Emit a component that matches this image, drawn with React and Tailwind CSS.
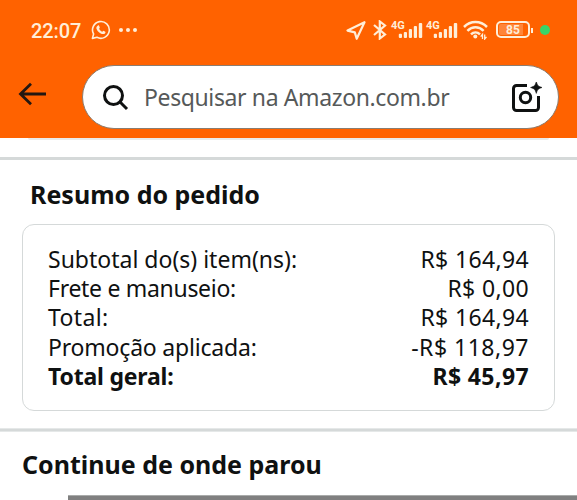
import React from 'react'

const summaryRows = [
  { label: 'Subtotal do(s) item(ns):', value: 'R$ 164,94', labelClass: 'tracking-[0px]', valueClass: 'tracking-[0.35px]' },
  { label: 'Frete e manuseio:', value: 'R$ 0,00', labelClass: 'tracking-[-0.3px]', valueClass: 'tracking-[0.35px]' },
  { label: 'Total:', value: 'R$ 164,94', labelClass: 'tracking-[0.35px]', valueClass: 'tracking-[0.35px]' },
  { label: 'Promoção aplicada:', value: '-R$ 118,97', labelClass: 'tracking-[-0.2px]', valueClass: 'tracking-[0.5px]' },
  { label: 'Total geral:', value: 'R$ 45,97', labelClass: 'tracking-[-0.2px]', valueClass: 'tracking-[0.4px]', bold: true },
]

function WhatsappIcon() {
  return (
    <svg className="w-[20px] h-[20px]" viewBox="0 0 20 20" fill="none" stroke="currentColor">
      <path d="M1.4 18.4 2.6 14A8.4 8.4 0 1 1 6 17.3Z" strokeWidth="1.6" strokeLinejoin="round" />
      <path
        d="M6.9 5.4c.5-.3 1-.2 1.2.3l.7 1.7c.1.4-.6.9-.7 1.3.7 1.4 1.7 2.4 3.1 3 .5-.1.9-1 1.3-.9l1.8.9c.4.3.1 1.3-.4 1.8-1.1 1-2.7.6-4.2-.1-2-1-3.5-2.7-4.2-4.6-.5-1.4.2-2.7 1.4-3.4Z"
        fill="currentColor"
        stroke="none"
      />
    </svg>
  )
}

function SignalIcon() {
  return (
    <div className="relative w-[32px] h-[20px]">
      <span className="absolute left-0 top-0 font-['Roboto'] font-bold text-[11px] leading-[12px]">4G</span>
      <svg className="w-[32px] h-[20px]" viewBox="0 0 32 20" fill="currentColor">
        <rect x="7.8" y="13.7" width="3.2" height="4.3" rx="1" />
        <rect x="12.8" y="12" width="3.2" height="6" rx="1" />
        <rect x="17.8" y="9" width="3.2" height="9" rx="1" />
        <rect x="22.8" y="6" width="3.2" height="12" rx="1" />
        <rect x="27.8" y="3" width="3.4" height="15" rx="1" />
      </svg>
    </div>
  )
}

function WifiIcon() {
  return (
    <svg className="w-[25px] h-[20px]" viewBox="0 0 25 20" fill="none" stroke="currentColor" strokeWidth="2.5">
      <path d="M1 7C7.5.4 17.5.4 24 7" />
      <path d="M4.4 10.8c4.7-4.6 11.5-4.6 16.2 0" />
      <path d="M8 14.4c2.6-2.5 6.4-2.5 9 0" />
      <circle cx="12.3" cy="16.6" r="2" fill="currentColor" stroke="none" />
      <path d="M19.5 19v-4.6l-1.8 2.2M21.7 14.4V19l1.8-2.2" strokeWidth="1.3" />
    </svg>
  )
}

function StatusBar() {
  return (
    <div className="flex h-[65px] shrink-0 pl-[31px] text-[#ffeed8]">
      <div className="mt-[20px] w-[60px] font-['Roboto'] font-medium text-[20px] leading-[22px] tracking-[-0.1px]">22:07</div>
      <div className="mt-[20px]"><WhatsappIcon /></div>
      <div className="mt-[28px] ml-[8px] flex gap-[3px]">
        <i className="size-[4px] rounded-full bg-current" />
        <i className="size-[4px] rounded-full bg-current" />
        <i className="size-[4px] rounded-full bg-current" />
      </div>
      <div className="mt-[20px] ml-auto flex">
        <svg className="w-[20px] h-[20px]" viewBox="0 0 20 20" fill="none" stroke="currentColor" strokeWidth="2.2" strokeLinejoin="round">
          <path d="M18.5 2.2 1.5 10.6l7.3 1.8L10.7 18.8Z" />
        </svg>
        <svg className="ml-[7px] w-[14px] h-[20px]" viewBox="0 0 14 20" fill="none" stroke="currentColor" strokeWidth="2.2">
          <path d="m1 5 11 9.500-5.200 4V1.500L12 5.500 1 15" />
        </svg>
        <div className="ml-[4px]"><SignalIcon /></div>
        <div className="ml-[3px]"><SignalIcon /></div>
        <div className="ml-[5px]"><WifiIcon /></div>
        <div className="mt-[1px] ml-[8px] flex h-[17px] w-[34px] items-center justify-center rounded-[5px] border-2 border-current">
          <span className="flex h-[11px] w-[28px] items-center justify-center rounded-[2px] bg-[linear-gradient(90deg,#ff8538_84%,#ff6200_84%)] font-['Roboto'] font-bold text-[12px] leading-[12px]">85</span>
        </div>
        <i className="mt-[8px] ml-[1px] h-[5px] w-[2px] bg-current" />
      </div>
      <i className="mt-[25px] mr-[27px] ml-[7px] size-[10px] rounded-full bg-[#39d468]" />
    </div>
  )
}

function SearchBar() {
  return (
    <div className="flex pl-[18px]">
      <svg className="mt-[17px] w-[29px] h-[24px] text-[#231711]" viewBox="0 0 29 24" fill="none" stroke="currentColor" strokeWidth="2.8">
        <path d="M28 12H2.500M13 1.800 2.500 12 13 22.200" />
      </svg>
      <div className="ml-[35px] flex h-[64px] w-[477px] items-center rounded-full border border-[#8b7d70] bg-white">
        <svg className="ml-[19px] w-[27px] h-[27px] text-[#0f1111]" viewBox="0 0 27 27" fill="none" stroke="currentColor" strokeWidth="3">
          <circle cx="11.500" cy="11.500" r="9" />
          <path d="m17.800 17.800 7.200 7.200" />
        </svg>
        <span className="ml-[15px] w-[367px] whitespace-nowrap font-['Noto_Sans',sans-serif] text-[23px] leading-[30px] tracking-[-0.38px] text-[#565959]">Pesquisar na Amazon.com.br</span>
        <svg className="w-[31px] h-[31px] text-[#0f1111]" viewBox="0 0 31 31" fill="none" stroke="currentColor" strokeWidth="3">
          <path d="M16 3.500H5.500a3 3 0 0 0-3 3v19a3 3 0 0 0 3 3h19a3 3 0 0 0 3-3V14" />
          <circle cx="14.500" cy="15.500" r="5.200" />
          <path d="M25.300-.4c1.200 4 1.700 4.600 5.700 5.900-4 1.300-4.500 1.900-5.700 5.900-1.200-4-1.700-4.600-5.700-5.900 4-1.300 4.500-1.900 5.700-5.900Z" fill="currentColor" stroke="currentColor" strokeWidth=".6" />
        </svg>
      </div>
    </div>
  )
}

export default function App() {
  return (
    <div className="flex h-[500px] w-[577px] flex-col overflow-hidden bg-white font-['Noto_Sans',sans-serif] text-[#0f1111]">
      <header className="h-[138px] shrink-0 bg-[#ff6200]">
        <StatusBar />
        <SearchBar />
      </header>

      <div className="ml-[28px] h-[2px] w-[521px] shrink-0 rounded-b-full bg-[#e9ebeb]" />
      <div className="mt-[17px] h-[3px] shrink-0 bg-[#d5d9d9]" />

      <section className="h-[268px] shrink-0">
        <h2 className="mt-[16px] ml-[30px] whitespace-nowrap text-[25px] font-bold leading-[36px]">Resumo do pedido</h2>
        <div className="mt-[12px] ml-[22px] h-[187px] w-[533px] rounded-[12px] border border-[#d5d9d9] px-[25px] pt-[19.5px]">
          {summaryRows.map((row) => (
            <div
              key={row.label}
              className={`flex h-[29.4px] justify-between whitespace-nowrap text-[23px] leading-[29.4px] ${row.bold ? 'font-bold' : ''}`}
            >
              <span className={row.labelClass}>{row.label}</span>
              <span className={row.valueClass}>{row.value}</span>
            </div>
          ))}
        </div>
      </section>

      <div className="h-[4px] shrink-0 border-y border-[#e5e8e8] bg-[#d5d9d9]" />
      <h2 className="mt-[14px] ml-[22px] shrink-0 whitespace-nowrap text-[25px] font-bold leading-[36px]">Continue de onde parou</h2>
      <div className="mt-auto ml-[68px] h-[5px] shrink-0 border-t border-[#a9abaa] bg-[#808080]" />
    </div>
  )
}
